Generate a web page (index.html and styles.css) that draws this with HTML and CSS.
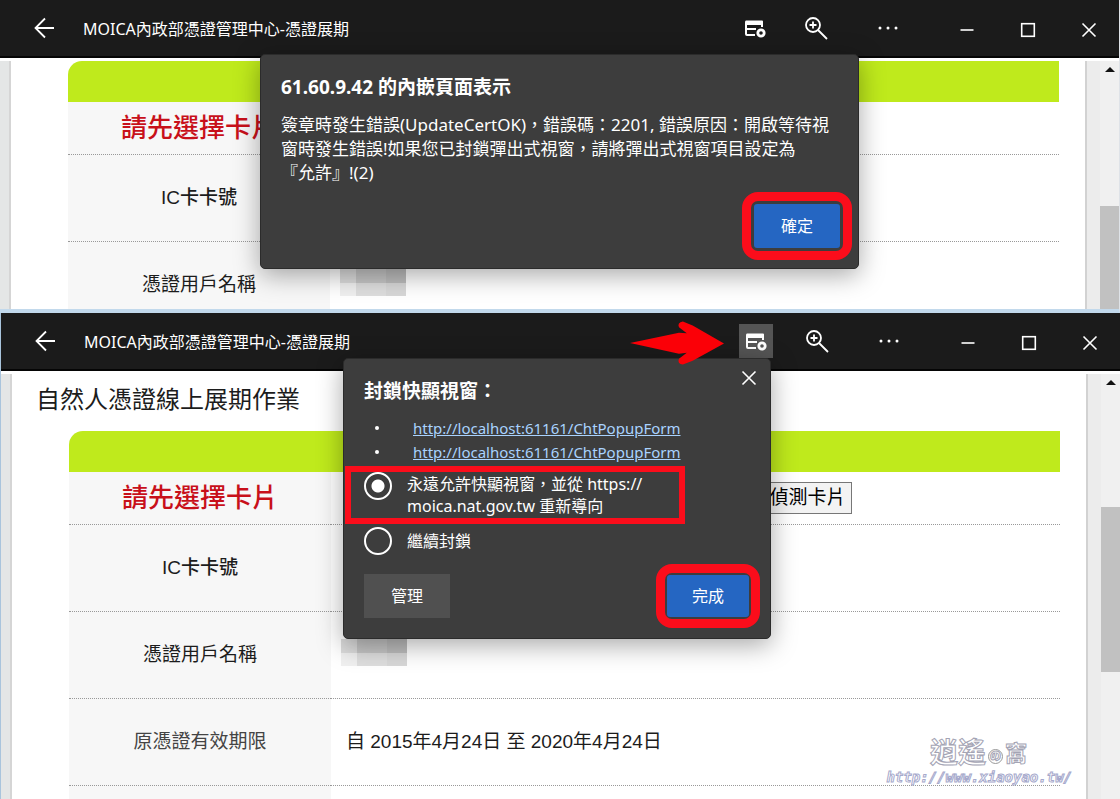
FILE: index.html
```html
<!DOCTYPE html>
<html lang="zh-Hant">
<head>
<meta charset="utf-8">
<title>MOICA內政部憑證管理中心-憑證展期</title>
<link rel="stylesheet" href="styles.css">
</head>
<body>
<svg class="defs" aria-hidden="true">
  <symbol id="i-back" viewBox="0 0 24 24"><path d="M21 12H3M12 2.500L2.500 12L12 21.500" fill="none" stroke="currentColor" stroke-width="1.800"/></symbol>
  <symbol id="i-popup" viewBox="0 0 24 24"><path d="M3 4.500h16q1 0 1 1V11h-2V9H4v3h9v2H4v4h8v2H4q-2 0-2-2V6.500q0-2 1-2z" fill="currentColor"/><circle cx="18" cy="17" r="3.200" fill="none" stroke="currentColor" stroke-width="2.800"/></symbol>
  <symbol id="i-zoom" viewBox="0 0 24 24"><circle cx="9" cy="9" r="7" fill="none" stroke="currentColor" stroke-width="1.800"/><path d="M5.500 9h7M9 5.500v7M14 14l9 9" stroke="currentColor" stroke-width="1.800" fill="none"/></symbol>
  <symbol id="i-more" viewBox="0 0 24 24"><circle cx="4" cy="12" r="1.500" fill="currentColor"/><circle cx="12" cy="12" r="1.500" fill="currentColor"/><circle cx="20" cy="12" r="1.500" fill="currentColor"/></symbol>
  <symbol id="i-min" viewBox="0 0 24 24"><path d="M5.500 12h13" stroke="currentColor" stroke-width="1.600"/></symbol>
  <symbol id="i-max" viewBox="0 0 24 24"><rect x="5.700" y="5.700" width="12.600" height="12.600" fill="none" stroke="currentColor" stroke-width="1.600"/></symbol>
  <symbol id="i-close" viewBox="0 0 24 24"><path d="M5.500 5.500l13 13M18.500 5.500l-13 13" stroke="currentColor" stroke-width="1.600"/></symbol>
</svg>

<section class="window window-first">
  <header class="titlebar">
    <button class="icon back" aria-label="返回"><svg><use href="#i-back"/></svg></button>
    <span class="caption">MOICA內政部憑證管理中心-憑證展期</span>
    <div class="tools">
      <button class="icon tool-popup" aria-label="快顯視窗"><svg><use href="#i-popup"/></svg></button>
      <button class="icon tool-zoom" aria-label="縮放"><svg><use href="#i-zoom"/></svg></button>
      <button class="icon tool-more" aria-label="更多"><svg><use href="#i-more"/></svg></button>
    </div>
    <div class="controls">
      <button class="icon" aria-label="最小化"><svg><use href="#i-min"/></svg></button>
      <button class="icon" aria-label="最大化"><svg><use href="#i-max"/></svg></button>
      <button class="icon" aria-label="關閉"><svg><use href="#i-close"/></svg></button>
    </div>
  </header>
  <div class="viewport">
    <div class="edge"></div>
    <main class="page">
      <table class="form">
        <colgroup><col class="col-label"><col></colgroup>
        <thead><tr><th colspan="2"></th></tr></thead>
        <tbody>
          <tr class="short"><th class="alert">請先選擇卡片</th><td></td></tr>
          <tr><th class="strong">IC卡卡號</th><td></td></tr>
          <tr><th class="medium">憑證用戶名稱</th><td><div class="mosaic"></div></td></tr>
        </tbody>
      </table>
    </main>
    <div class="gutter"></div>
    <div class="scroll"><i class="up"></i><i class="thumb"></i></div>
  </div>
  <div class="dialog alert-dialog" role="alertdialog" aria-labelledby="alert-title">
    <h2 id="alert-title">61.60.9.42 的內嵌頁面表示</h2>
    <p>簽章時發生錯誤(UpdateCertOK)，錯誤碼：2201, 錯誤原因：開啟等待視窗時發生錯誤!如果您已封鎖彈出式視窗，請將彈出式視窗項目設定為<span class="quoted">『允許』!(2)</span></p>
    <div class="ring"><button class="btn primary">確定</button></div>
  </div>
</section>

<section class="window window-second">
  <header class="titlebar">
    <button class="icon back" aria-label="返回"><svg><use href="#i-back"/></svg></button>
    <span class="caption">MOICA內政部憑證管理中心-憑證展期</span>
    <div class="tools">
      <button class="icon tool-popup active" aria-label="快顯視窗"><svg><use href="#i-popup"/></svg></button>
      <button class="icon tool-zoom" aria-label="縮放"><svg><use href="#i-zoom"/></svg></button>
      <button class="icon tool-more" aria-label="更多"><svg><use href="#i-more"/></svg></button>
    </div>
    <div class="controls">
      <button class="icon" aria-label="最小化"><svg><use href="#i-min"/></svg></button>
      <button class="icon" aria-label="最大化"><svg><use href="#i-max"/></svg></button>
      <button class="icon" aria-label="關閉"><svg><use href="#i-close"/></svg></button>
    </div>
  </header>
  <div class="viewport">
    <div class="edge"></div>
    <main class="page">
      <h1>自然人憑證線上展期作業</h1>
      <table class="form">
        <colgroup><col class="col-label"><col></colgroup>
        <thead><tr><th colspan="2"></th></tr></thead>
        <tbody>
          <tr class="short"><th class="alert">請先選擇卡片</th><td><button class="detect">偵測卡片</button></td></tr>
          <tr><th class="strong">IC卡卡號</th><td></td></tr>
          <tr><th class="medium">憑證用戶名稱</th><td><div class="mosaic"></div></td></tr>
          <tr><th>原憑證有效期限</th><td>自 2015年4月24日 至 2020年4月24日</td></tr>
          <tr><th></th><td></td></tr>
        </tbody>
      </table>
    </main>
    <div class="gutter"></div>
    <div class="scroll"><i class="up"></i><i class="thumb"></i></div>
  </div>
  <div class="dialog popup-dialog" role="dialog" aria-labelledby="popup-title">
    <button class="icon dismiss" aria-label="關閉"><svg><use href="#i-close"/></svg></button>
    <h2 id="popup-title">封鎖快顯視窗：</h2>
    <ul>
      <li><a href="#">http://localhost:61161/ChtPopupForm</a></li>
      <li><a href="#">http://localhost:61161/ChtPopupForm</a></li>
    </ul>
    <div class="options">
      <label class="option marked"><input type="radio" name="popup" checked><span>永遠允許快顯視窗，並從 https://<br>moica.nat.gov.tw 重新導向</span></label>
      <label class="option"><input type="radio" name="popup"><span>繼續封鎖</span></label>
    </div>
    <div class="actions">
      <button class="btn">管理</button>
      <div class="ring"><button class="btn primary">完成</button></div>
    </div>
  </div>
  <svg class="arrow" viewBox="0 0 96 46" aria-hidden="true"><path d="M0 23L50 12.500L58 13L50 7Q48 2 54 1L64 5L96 23.500L64 41L54 45Q48 44 50 39L58 33L50 34Z" fill="#fb0007"/></svg>
  <div class="watermark">
    <div class="brand"><span>逍遙</span><b>の</b><em>窩</em></div>
    <div class="url">http://www.xiaoyao.tw/</div>
  </div>
</section>
</body>
</html>
```
FILE: styles.css
```css
* { box-sizing: border-box; }

body {
  margin: 0;
  height: 100vh;
  display: grid;
  grid-template-rows: minmax(0, 313fr) minmax(0, 486fr);
  font-family: "Noto Sans", "Noto Sans CJK TC", sans-serif;
  font-size: 16px;
  color: #1c1c1c;
  background: #fff;
}

.defs { display: none; }
button { font: inherit; cursor: pointer; }

.window {
  position: relative;
  display: flex;
  flex-direction: column;
  overflow: hidden;
}
.window-first { border-right: 1px solid #dfe3e8; border-bottom: 4px solid #c2d9ec; }
.window-second { border-left: 1px solid #a9c4dc; }

/* Title bar */
.titlebar {
  display: flex;
  align-items: center;
  height: 58px;
  flex: none;
  padding-left: 33px;
  background: #1b1b1b;
  border-bottom: 2px solid #050505;
  color: #fff;
}
.icon {
  display: flex;
  align-items: center;
  justify-content: center;
  padding: 0;
  border: 0;
  background: none;
  color: #fff;
}
.icon svg { width: 24px; height: 24px; }
.caption { margin-left: 26px; flex: 1; white-space: nowrap; }
.tools { display: flex; align-items: center; }
.tools .icon { width: 34px; height: 34px; }
.tool-popup { margin-right: 27px; }
.tool-popup.active { background: #555; }
.tool-zoom { margin-right: 38px; }
.tool-more { margin-right: 31px; }
.controls { display: flex; padding-top: 3px; }
.controls .icon { width: 61px; height: 40px; }

/* Page area */
.viewport {
  flex: 1;
  min-height: 0;
  display: grid;
  grid-template-columns: 11px minmax(0, 1fr) 15px 19px;
  background: #fff;
}
.edge { margin-top: 3px; background: #e4e6e6; border-right: 2px solid #d5d5d5; }
.page { overflow: hidden; padding: 3px 26px 0 57px; }
.gutter { margin-top: 3px; background: #ececec; border-left: 2px solid #d2d2d2; }
.scroll {
  margin-top: 3px;
  background: #f0f0f0;
  display: flex;
  flex-direction: column;
  align-items: center;
}
.up {
  margin: 6px 0;
  border: 5px solid transparent;
  border-top: 0;
  border-bottom: 5px solid #111;
}
.thumb { width: 100%; background: #c1c1c1; }
.window-first .thumb { margin-top: 128px; flex: 1; }
.window-second .thumb { margin-top: 116px; height: 165px; }

h1 {
  margin: 9px 0 17px -33px;
  font-size: 24px;
  line-height: 31px;
  font-weight: 400;
}
.form {
  width: 100%;
  table-layout: fixed;
  border-collapse: separate;
  border-spacing: 0;
  font-family: "Liberation Sans", "Noto Sans CJK TC", sans-serif;
  font-size: 19px;
}
.col-label { width: 262px; }
.form thead th {
  height: 41px;
  padding: 0;
  background: #bfea1c;
  border-radius: 14px 0 0 0;
}
.form tbody th, .form tbody td {
  height: 87px;
  padding: 0 0 5px;
  border-bottom: 1px dotted #999;
}
.form tbody th { background: #f7f7f7; font-weight: 400; color: #444; }
.form tbody td { padding-left: 15px; }
.form .short th, .form .short td { height: 53px; }
.form .short td { padding-bottom: 0; }
.form .medium { color: #1c1c1c; }
.form .strong { font-weight: 500; color: #1c1c1c; }
.form .alert { font-size: 26px; font-weight: 500; color: #c8101a; }
.detect {
  display: block;
  margin-left: 417px;
  width: 89px;
  padding: 0;
  height: 32px;
  border: 1px solid #777;
  background: #f3f3f3;
  line-height: 28px;
  white-space: nowrap;
}
.mosaic {
  width: 66px;
  height: 27px;
  margin-left: -5px;
  background:
    linear-gradient(90deg, #dcdcdc 16px, #c6c6c6 16px 46px, #bdbdbd 46px) 0 0 / 100% 14px no-repeat,
    linear-gradient(90deg, #f0f0f0 16px, #dedede 16px 46px, #d8d8d8 46px) 0 14px / 100% 13px no-repeat;
}

/* Dialogs */
.dialog {
  position: absolute;
  background: #3d3d3d;
  color: #fff;
  border: 1px solid #2b2b2b;
  border-radius: 5px;
  box-shadow: 0 6px 26px rgba(0, 0, 0, .35);
}
.dialog h2 { margin: 0; font-size: 19px; line-height: 26px; font-weight: 700; }
.alert-dialog {
  top: 54px;
  left: 260px;
  width: 599px;
  padding: 19px 6px 8px 20px;
  display: flex;
  flex-direction: column;
}
.alert-dialog p { margin: 13px 18px 7px 0; font-size: 17px; line-height: 24px; }
.quoted { display: inline-block; }
.btn {
  display: block;
  width: 86px;
  height: 44px;
  padding: 0 0 2px;
  border: 0;
  background: #505050;
  color: #fff;
}
.primary { background: #2566c2; border-radius: 3px; }
.ring {
  align-self: flex-end;
  padding: 3px;
  border: 9px solid #fb0d1b;
  border-radius: 16px;
}

.popup-dialog { top: 45px; right: 349px; width: 428px; padding: 19px 10px 10px 20px; }
.dismiss { position: absolute; top: 7px; right: 9px; }
.popup-dialog ul { margin: 12px 0 2px; padding: 0; list-style: none; line-height: 24px; font-size: 15px; }
.popup-dialog li { display: flex; }
.popup-dialog li::before {
  content: "";
  width: 4px;
  height: 4px;
  margin: 10px 34px 0 11px;
  border-radius: 50%;
  background: #fff;
}
.popup-dialog a { color: #a9d3ff; }
.option {
  display: flex;
  gap: 15px;
  align-items: center;
  line-height: 22px;
}
.marked {
  width: 340px;
  height: 58px;
  margin-left: -19px;
  padding-left: 13px;
  border: 6px solid #fb0d1b;
}
.option input {
  appearance: none;
  width: 28px;
  height: 28px;
  margin: 0;
  flex: none;
  border: 2px solid #fff;
  border-radius: 50%;
}
.marked input { align-self: flex-start; }
.option input:checked { background: radial-gradient(circle, #fff 6px, transparent 7px); }
.option + .option { margin-top: 3px; }
.actions { display: flex; align-items: center; justify-content: space-between; margin-top: 9px; }
.popup-dialog .primary { width: 82px; height: 42px; }
.popup-dialog .ring { padding: 2px; }

.arrow { position: absolute; top: 7px; right: 396px; width: 94px; height: 46px; }

.watermark { position: absolute; right: 48px; bottom: 14px; color: #fff; text-align: right; }
.brand {
  display: flex;
  align-items: center;
  justify-content: flex-end;
  padding-right: 45px;
  line-height: 34px;
  font-size: 28px;
  font-weight: 700;
  -webkit-text-stroke: 1px #a4a4b4;
}
.brand b {
  width: 15px;
  height: 15px;
  margin: 8px 2px 0;
  border: 1px solid #999;
  border-radius: 50%;
  font-size: 11px;
  line-height: 12px;
  text-align: center;
}
.brand em { font-size: 22px; font-style: normal; }
.url {
  font: italic 700 14px/16px "DejaVu Sans Mono", monospace;
  -webkit-text-stroke: 1px #a6a9cc;
}
```
